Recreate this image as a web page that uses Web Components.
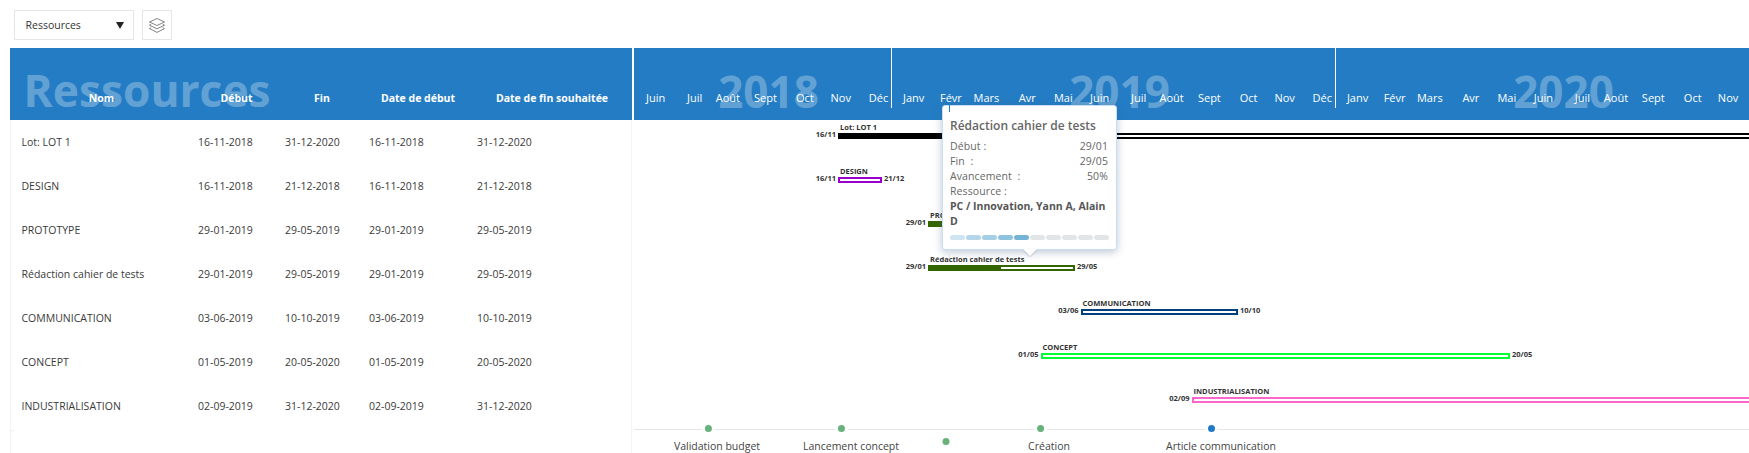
<!DOCTYPE html>
<html lang="fr">
<head>
<meta charset="utf-8">
<title>Ressources</title>
<style>
  html, body { margin: 0; padding: 0; background: #fff; overflow: hidden; height: 453px; }
  body { font-family: "Open Sans", "Noto Sans", sans-serif; color: #333; }
</style>
</head>
<body>
<gantt-app></gantt-app>

<script>
const BLUE = '#247dc4';

const rows = [
  ['Lot: LOT 1', '16-11-2018', '31-12-2020', '16-11-2018', '31-12-2020'],
  ['DESIGN', '16-11-2018', '21-12-2018', '16-11-2018', '21-12-2018'],
  ['PROTOTYPE', '29-01-2019', '29-05-2019', '29-01-2019', '29-05-2019'],
  ['Rédaction cahier de tests', '29-01-2019', '29-05-2019', '29-01-2019', '29-05-2019'],
  ['COMMUNICATION', '03-06-2019', '10-10-2019', '03-06-2019', '10-10-2019'],
  ['CONCEPT', '01-05-2019', '20-05-2020', '01-05-2019', '20-05-2020'],
  ['INDUSTRIALISATION', '02-09-2019', '31-12-2020', '02-09-2019', '31-12-2020'],
];

// x values are page pixels, the timeline starts at 634
const bars = [
  { x: 838, end: 1790, color: '#000', done: 170, label: 'Lot: LOT 1', from: '16/11' },
  { x: 838, end: 882, color: '#9900cc', done: 0, label: 'DESIGN', from: '16/11', to: '21/12' },
  { x: 928, end: 1075, color: '#336600', done: 147, label: 'PROTOTYPE', from: '29/01', to: '29/05' },
  { x: 928, end: 1075, color: '#336600', done: 73, label: 'Rédaction cahier de tests', from: '29/01', to: '29/05' },
  { x: 1080.5, end: 1238, color: '#004080', done: 0, label: 'COMMUNICATION', from: '03/06', to: '10/10' },
  { x: 1040.5, end: 1510, color: '#00ff33', done: 0, label: 'CONCEPT', from: '01/05', to: '20/05' },
  { x: 1191.5, end: 1790, color: '#ff66cc', done: 0, label: 'INDUSTRIALISATION', from: '02/09' },
];

const months = [
  ['Juin', 646], ['Juil', 687], ['Août', 715.7], ['Sept', 754], ['Oct', 796], ['Nov', 830.5], ['Déc', 868.8],
  ['Janv', 903], ['Févr', 940], ['Mars', 973.6], ['Avr', 1018.8], ['Mai', 1054], ['Juin', 1090], ['Juil', 1131],
  ['Août', 1159.6], ['Sept', 1198], ['Oct', 1239.8], ['Nov', 1274.5], ['Déc', 1312.7],
  ['Janv', 1347], ['Févr', 1383.8], ['Mars', 1417], ['Avr', 1462.5], ['Mai', 1497.6], ['Juin', 1534], ['Juil', 1575],
  ['Août', 1604], ['Sept', 1642], ['Oct', 1684], ['Nov', 1718], ['', 1760],
];

const milestones = [
  { center: 717, dot: 708, label: 'Validation budget', color: '#66b27a' },
  { center: 851, dot: 841.6, label: 'Lancement concept', color: '#66b27a' },
  { center: 946, dot: 946, label: '', color: '#66b27a', low: true },
  { center: 1049, dot: 1040.4, label: 'Création', color: '#66b27a' },
  { center: 1221, dot: 1212, label: 'Article communication', color: '#2278c8' },
];

class GanttSelect extends HTMLElement {
  constructor() {
    super();
    this.attachShadow({ mode: 'open' }).innerHTML = `
    <style>
      :host {
        display: flex;
        align-items: center;
        justify-content: space-between;
        box-sizing: border-box;
        width: 120px;
        height: 30px;
        padding: 0 9px 0 10.5px;
        border: 1px solid #e4e6e8;
        font-size: 10.5px;
        color: #333;
      }
      .arrow {
        width: 0;
        height: 0;
        border-left: 4px solid transparent;
        border-right: 4px solid transparent;
        border-top: 7px solid #222;
      }
    </style>
    <slot></slot><span class="arrow"></span>`;
  }
}

class GanttLayersButton extends HTMLElement {
  constructor() {
    super();
    this.attachShadow({ mode: 'open' }).innerHTML = `
    <style>
      :host {
        display: flex;
        align-items: center;
        justify-content: center;
        box-sizing: border-box;
        width: 30px;
        height: 30px;
        border: 1px solid #e4e6e8;
      }
    </style>
    <svg width="16" height="15" viewBox="0 0 16 15" fill="none" stroke="#666" stroke-width="0.8">
      <path d="M8 .5 15.5 4 8 7.5 .5 4Z"/>
      <path d="M2.2 6.2 .5 7.2 8 10.8 15.5 7.2 13.8 6.2"/>
      <path d="M2.2 9.6 .5 10.6 8 14.4 15.5 10.6 13.8 9.6"/>
    </svg>`;
  }
}

class GanttTable extends HTMLElement {
  constructor() {
    super();
    const cells = rows.map(r => `
      <div class="row">
        ${r.map((c, i) => `<span class="${i ? 'date' : 'name'}">${c}</span>`).join('')}
      </div>`).join('');

    this.attachShadow({ mode: 'open' }).innerHTML = `
    <style>
      :host {
        display: block;
        flex: 0 0 622px;
        width: 622px;
      }
      .head {
        display: grid;
        background: ${BLUE};
        height: 72px;
        overflow: hidden;
      }
      .head > * { grid-area: 1 / 1; }
      .title {
        margin: 20px 0 0 13.5px;
        font-size: 44.3px;
        line-height: 44px;
        font-weight: 700;
        color: rgba(255, 255, 255, .3);
      }
      .labels {
        display: grid;
        grid-template-columns: 183px 87px 84px 108px 160px;
        padding-top: 43px;
        text-align: center;
        font-size: 10.5px;
        line-height: 14px;
        font-weight: 700;
        color: #fff;
      }
      .body {
        border-left: 1px solid #f4f4f4;
        border-right: 1px solid #f4f4f4;
        height: 333px;
      }
      .row {
        display: grid;
        grid-template-columns: 183px 87px 84px 108px 160px;
        align-items: center;
        height: 44px;
        margin-left: -1px;
        font-size: 10.5px;
        color: #3a3a3a;
      }
      .name { padding-left: 11.5px; }
      .date { padding-left: 5px; }
      .tick {
        width: 4px;
        margin: 2px 0 0 -1px;
        border-top: 1px solid #eceeef;
      }
    </style>
    <div class="head">
      <div class="title">Ressources</div>
      <div class="labels">
        <span>Nom</span><span>Début</span><span>Fin</span><span>Date de début</span><span>Date de fin souhaitée</span>
      </div>
    </div>
    <div class="body">
      ${cells}
      <div class="tick"></div>
    </div>`;
  }
}

class GanttTimescale extends HTMLElement {
  constructor() {
    super();
    const cells = months.slice(0, -1).map(([name, left], i) =>
      `<span style="flex-basis:${months[i + 1][1] - left}px">${name}</span>`).join('');

    this.attachShadow({ mode: 'open' }).innerHTML = `
    <style>
      :host {
        display: grid;
        height: 72px;
        background: ${BLUE};
        overflow: hidden;
      }
      .years, .months { grid-area: 1 / 1; }
      .years { display: flex; }
      .year {
        box-sizing: border-box;
        height: 60px;
        padding-top: 21px;
        text-align: center;
        font-size: 44px;
        line-height: 44px;
        font-weight: 700;
        color: rgba(255, 255, 255, .3);
      }
      .year + .year { border-left: 1px solid #fff; }
      .months {
        display: flex;
        padding: 43px 0 0 12px;
        font-size: 11px;
        line-height: 14px;
        color: #fff;
      }
      .months span { flex: 0 0 auto; white-space: nowrap; }
    </style>
    <div class="years">
      <div class="year" style="flex:0 0 257px;padding-left:12px">2018</div>
      <div class="year" style="flex:0 0 444px;padding-left:12px">2019</div>
      <div class="year" style="flex:0 0 444px;padding-left:12px">2020</div>
    </div>
    <div class="months">${cells}</div>`;
  }
}

class GanttBar extends HTMLElement {
  constructor() {
    super();
    this.attachShadow({ mode: 'open' });
  }

  connectedCallback() {
    const x = +this.getAttribute('x') - 634;
    const width = +this.getAttribute('end') - +this.getAttribute('x');
    const color = this.getAttribute('color');
    const done = +this.getAttribute('done');
    const to = this.getAttribute('to');

    this.shadowRoot.innerHTML = `
    <style>
      :host {
        display: block;
        position: relative;
        height: 44px;
      }
      .bar {
        position: absolute;
        top: 13px;
        left: ${x}px;
        box-sizing: border-box;
        width: ${width}px;
        height: 6px;
        border: 2px solid ${color};
        background: #fff;
      }
      .done {
        position: absolute;
        inset: -2px auto -2px -2px;
        width: ${done}px;
        background: ${color};
      }
      .label, .date {
        position: absolute;
        white-space: nowrap;
        font-weight: 700;
        color: #333;
        line-height: 10px;
      }
      .label { left: 0; top: -13px; font-size: 7.5px; }
      .date { top: -6px; font-size: 7.5px; }
      .from { right: calc(100% + 4px); }
      .to { left: calc(100% + 4px); }
    </style>
    <div class="bar">
      <div class="done"></div>
      <span class="label"><slot></slot></span>
      <span class="date from">${this.getAttribute('from')}</span>
      ${to ? `<span class="date to">${to}</span>` : ''}
    </div>`;
  }
}

class GanttMilestone extends HTMLElement {
  constructor() {
    super();
    this.attachShadow({ mode: 'open' });
  }

  connectedCallback() {
    const center = +this.getAttribute('center') - 634;
    const shift = +this.getAttribute('dot') - +this.getAttribute('center');
    const low = this.hasAttribute('low');

    this.shadowRoot.innerHTML = `
    <style>
      :host {
        position: absolute;
        top: ${low ? 8 : -5}px;
        left: ${center}px;
        display: flex;
        flex-direction: column;
        align-items: center;
        transform: translateX(-50%);
        white-space: nowrap;
        font-size: 10.5px;
        line-height: 16px;
        color: #444;
      }
      .dot {
        width: 7px;
        height: 7px;
        margin-left: ${shift * 2}px;
        border-radius: 50%;
        background: ${this.getAttribute('color')};
        box-shadow: 0 0 0 3px #fff;
      }
      .label { margin-top: 6px; }
    </style>
    <span class="dot"></span>
    <span class="label"><slot></slot></span>`;
  }
}

class GanttTooltip extends HTMLElement {
  constructor() {
    super();
    const pills = ['#cfe4f1', '#b5d6ea', '#a5cfe5', '#8dc3df', '#74b3d6',
      '#e2e5e8', '#e2e5e8', '#e2e5e8', '#e2e5e8', '#e2e5e8'];

    this.attachShadow({ mode: 'open' }).innerHTML = `
    <style>
      :host {
        position: absolute;
        top: 57px;
        left: 308px;
        box-sizing: border-box;
        width: 175px;
        height: 145px;
        padding: 11px 8px 0 7px;
        background: #fff;
        border: 1px solid #c9ddf4;
        border-radius: 3px;
        box-shadow: 0 2px 8px rgba(60, 90, 130, .35);
        font-size: 10.5px;
        line-height: 15px;
        color: #666;
      }
      .title {
        margin-bottom: 4.5px;
        font-size: 12px;
        line-height: 17px;
        font-weight: 600;
      }
      .line { display: flex; justify-content: space-between; letter-spacing: .1px; }
      strong { display: block; color: #555; }
      .pills {
        display: grid;
        grid-template-columns: repeat(10, 15px);
        gap: 1px;
        margin-top: 6.5px;
      }
      .pills i { height: 5px; border-radius: 2.5px; }
      .mark {
        position: absolute;
        left: 6px;
        width: 1px;
      }
      .mark.top { top: -1px; height: 7px; background: ${BLUE}; }
      .mark.bottom { bottom: -9px; height: 8px; background: #e6e8ea; }
      .tip {
        position: absolute;
        left: 80px;
        bottom: -7px;
        width: 0;
        height: 0;
        border-left: 7px solid transparent;
        border-right: 7px solid transparent;
        border-top: 7px solid #fff;
        filter: drop-shadow(0 1px 1px rgba(60, 90, 130, .3));
      }
    </style>
    <span class="mark top"></span>
    <div class="title">Rédaction cahier de tests</div>
    <div class="line"><span>Début :</span><span>29/01</span></div>
    <div class="line"><span>Fin&nbsp; :</span><span>29/05</span></div>
    <div class="line"><span>Avancement&nbsp; :</span><span>50%</span></div>
    <div class="line"><span>Ressource :</span></div>
    <strong>PC / Innovation, Yann A, Alain D</strong>
    <div class="pills">${pills.map(c => `<i style="background:${c}"></i>`).join('')}</div>
    <span class="tip"></span>
    <span class="mark bottom"></span>`;
  }
}

class GanttChart extends HTMLElement {
  constructor() {
    super();
    const barList = bars.map(b => `
      <gantt-bar x="${b.x}" end="${b.end}" color="${b.color}" done="${b.done}" from="${b.from}" ${b.to ? `to="${b.to}"` : ''}>${b.label}</gantt-bar>`).join('');
    const milestoneList = milestones.map(m => `
      <gantt-milestone center="${m.center}" dot="${m.dot}" color="${m.color}" ${m.low ? 'low' : ''}>${m.label}</gantt-milestone>`).join('');

    this.attachShadow({ mode: 'open' }).innerHTML = `
    <style>
      :host {
        display: block;
        position: relative;
        flex: 1;
        min-width: 0;
        height: 405px;
        overflow: hidden;
      }
      .milestones {
        position: relative;
        height: 23px;
        margin-top: 1px;
        border-top: 1px solid #e4e6e8;
      }
    </style>
    <gantt-timescale></gantt-timescale>
    <div class="rows">${barList}</div>
    <div class="milestones">${milestoneList}</div>
    <gantt-tooltip></gantt-tooltip>`;
  }
}

class GanttApp extends HTMLElement {
  constructor() {
    super();
    this.attachShadow({ mode: 'open' }).innerHTML = `
    <style>
      :host { display: block; }
      .toolbar {
        display: flex;
        gap: 8px;
        padding: 10px 14px 8px;
      }
      .main {
        display: flex;
        gap: 2px;
        margin-left: 10px;
      }
    </style>
    <div class="toolbar">
      <gantt-select>Ressources</gantt-select>
      <gantt-layers-button></gantt-layers-button>
    </div>
    <div class="main">
      <gantt-table></gantt-table>
      <gantt-chart></gantt-chart>
    </div>`;
  }
}

customElements.define('gantt-select', GanttSelect);
customElements.define('gantt-layers-button', GanttLayersButton);
customElements.define('gantt-table', GanttTable);
customElements.define('gantt-timescale', GanttTimescale);
customElements.define('gantt-bar', GanttBar);
customElements.define('gantt-milestone', GanttMilestone);
customElements.define('gantt-tooltip', GanttTooltip);
customElements.define('gantt-chart', GanttChart);
customElements.define('gantt-app', GanttApp);
</script>
</body>
</html>
